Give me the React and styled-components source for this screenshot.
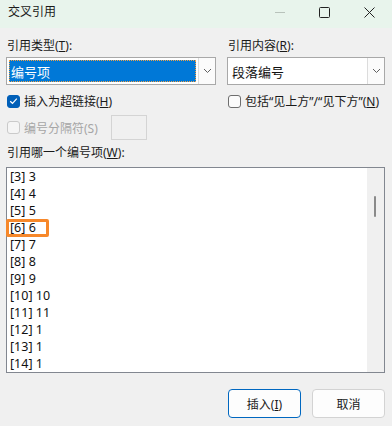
import styled, { createGlobalStyle } from "styled-components";

const Global = createGlobalStyle`
  html, body { margin: 0; padding: 0; background: #f0f0f0; }
  body {
    font-family: "Noto Sans", "Noto Sans CJK SC", sans-serif;
    font-size: 12px;
    color: #1a1a1a;
  }
`;

const Window = styled.div`
  width: 392px;
  height: 426px;
  background: #f0f0f0;
  display: flex;
  flex-direction: column;
  overflow: hidden;
`;

const TitleBar = styled.div`
  height: 28px;
  background: #e8f4ec;
  display: flex;
  align-items: center;
  padding-left: 8px;
`;

const Title = styled.div`
  flex: 1;
  font-size: 12px;
  line-height: 16px;
  margin-top: -4px;
`;

const WinButton = styled.div`
  width: 45px;
  height: 28px;
  display: flex;
  align-items: center;
  justify-content: center;
  margin-top: -4px;
  color: ${(p) => (p.$disabled ? "#b8c2bb" : "#222")};
`;

const Body = styled.div`
  padding: 10px 7px 0 6px;
  display: flex;
  flex-direction: column;
`;

const Columns = styled.div`
  display: grid;
  grid-template-columns: 210px 158px;
  column-gap: 11px;
`;

const Col = styled.div`
  display: flex;
  flex-direction: column;
`;

const Label = styled.div`
  line-height: 16px;
  height: 16px;
  padding-left: 1px;
  margin-top: ${(p) => p.$mt || 0}px;
  white-space: nowrap;
`;

const Combo = styled.div`
  margin-top: 3px;
  height: 28px;
  box-sizing: border-box;
  border: 1px solid #a8a8a8;
  background: #fff;
  display: flex;
`;

const ComboText = styled.div`
  flex: 1;
  margin: 2px;
  padding-left: 1px;
  display: flex;
  align-items: center;
  font-size: 13px;
  background: ${(p) => (p.$selected ? "#0078d7" : "transparent")};
  color: ${(p) => (p.$selected ? "#fff" : "#111")};
  border: 1px dotted ${(p) => (p.$selected ? "#f3a245" : "transparent")};
`;

const DropButton = styled.div`
  width: 16px;
  border-left: 1px solid #dcdcdc;
  background: #fbfbfb;
  display: flex;
  align-items: center;
  justify-content: center;
`;

const CheckRow = styled.label`
  display: flex;
  align-items: center;
  gap: 4px;
  height: ${(p) => p.$h || 16}px;
  margin-top: ${(p) => p.$mt || 0}px;
  color: ${(p) => (p.$disabled ? "#a6a6a6" : "#1a1a1a")};
  white-space: nowrap;
`;

const Box = styled.span`
  width: 13px;
  height: 13px;
  box-sizing: border-box;
  border-radius: 3px;
  border: 1px solid ${(p) => (p.$checked ? "#005fb8" : p.$disabled ? "#cacaca" : "#6e6e6e")};
  background: ${(p) => (p.$checked ? "#005fb8" : p.$disabled ? "#f5f5f5" : "#fbfbfb")};
  display: inline-flex;
  align-items: center;
  justify-content: center;
  flex-shrink: 0;
  margin-left: 1px;
`;

const SeparatorBox = styled.div`
  width: 36px;
  height: 25px;
  box-sizing: border-box;
  border: 1px solid #d4d4d4;
  background: #f0f0f0;
  margin-left: 9px;
`;

const ListWrap = styled.div`
  position: relative;
  margin-top: 6px;
  height: 206px;
  box-sizing: border-box;
  border: 1px solid #828790;
  background: #fff;
  display: flex;
`;

const List = styled.div`
  flex: 1;
  padding-left: 3px;
`;

const Item = styled.div`
  height: 17px;
  line-height: 17px;
  font-size: 12.5px;
  color: #111;
`;

const ScrollTrack = styled.div`
  width: 17px;
  background: #f0f0f0;
  position: relative;
`;

const Thumb = styled.div`
  position: absolute;
  left: 7px;
  top: 28px;
  width: 2px;
  height: 21px;
  border-radius: 1px;
  background: #8a8a8a;
`;

const Mark = styled.div`
  position: absolute;
  left: -1px;
  top: 51px;
  width: 43px;
  height: 18px;
  box-sizing: border-box;
  border: 3px solid #f7882a;
  border-radius: 2px;
`;

const Footer = styled.div`
  display: flex;
  justify-content: flex-end;
  gap: 11px;
  margin-top: 16px;
`;

const Button = styled.button`
  width: 73px;
  height: 29px;
  box-sizing: border-box;
  border-radius: 4px;
  font-family: inherit;
  font-size: 12px;
  color: #1a1a1a;
  background: #fdfdfd;
  border: 1px solid ${(p) => (p.$primary ? "#0067c0" : "#d3d3d3")};
  padding: 0;
`;

const Chevron = () => (
  <svg width="9" height="6" viewBox="0 0 9 6">
    <path d="M1 1 L4.5 4.5 L8 1" fill="none" stroke="#606060" strokeWidth="1" />
  </svg>
);

const Tick = () => (
  <svg width="9" height="8" viewBox="0 0 9 8">
    <path d="M1.2 4.2 L3.5 6.3 L7.8 1.6" fill="none" stroke="#fff" strokeWidth="1.2" />
  </svg>
);

const items = [
  "[3] 3", "[4] 4", "[5] 5", "[6] 6", "[7] 7", "[8] 8",
  "[9] 9", "[10] 10", "[11] 11", "[12] 1", "[13] 1", "[14] 1",
];

export default function App() {
  return (
    <Window>
      <Global />
      <TitleBar>
        <Title>交叉引用</Title>
        <WinButton $disabled>
          <svg width="10" height="10" viewBox="0 0 10 10">
            <path d="M0 5.5 H10" stroke="currentColor" strokeWidth="1" />
          </svg>
        </WinButton>
        <WinButton>
          <svg width="11" height="11" viewBox="0 0 11 11">
            <rect x="0.5" y="0.5" width="10" height="10" rx="1" fill="none" stroke="currentColor" strokeWidth="1" />
          </svg>
        </WinButton>
        <WinButton>
          <svg width="11" height="11" viewBox="0 0 11 11">
            <path d="M0.5 0.5 L10.5 10.5 M10.5 0.5 L0.5 10.5" stroke="currentColor" strokeWidth="1" />
          </svg>
        </WinButton>
      </TitleBar>
      <Body>
        <Columns>
          <Col>
            <Label>引用类型(<u>T</u>):</Label>
            <Combo>
              <ComboText $selected>编号项</ComboText>
              <DropButton><Chevron /></DropButton>
            </Combo>
            <CheckRow $mt={8}>
              <Box $checked><Tick /></Box>
              <span>插入为超链接(<u>H</u>)</span>
            </CheckRow>
            <CheckRow $mt={6} $h={25} $disabled>
              <Box $disabled />
              <span>编号分隔符(S)</span>
              <SeparatorBox />
            </CheckRow>
          </Col>
          <Col>
            <Label>引用内容(<u>R</u>):</Label>
            <Combo>
              <ComboText>段落编号</ComboText>
              <DropButton><Chevron /></DropButton>
            </Combo>
            <CheckRow $mt={8}>
              <Box />
              <span>包括“见上方”/“见下方”(<u>N</u>)</span>
            </CheckRow>
          </Col>
        </Columns>
        <Label $mt={5}>引用哪一个编号项(<u>W</u>):</Label>
        <ListWrap>
          <List>
            {items.map((t) => (
              <Item key={t}>{t}</Item>
            ))}
          </List>
          <ScrollTrack>
            <Thumb />
          </ScrollTrack>
          <Mark />
        </ListWrap>
        <Footer>
          <Button $primary>插入(<u>I</u>)</Button>
          <Button>取消</Button>
        </Footer>
      </Body>
    </Window>
  );
}
